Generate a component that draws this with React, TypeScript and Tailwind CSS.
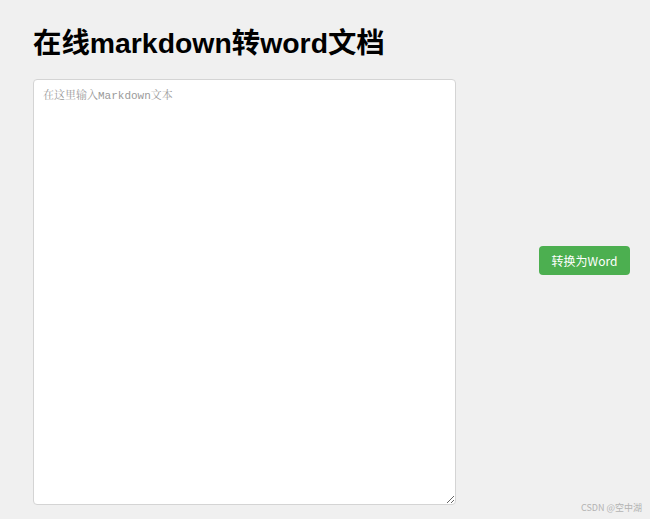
import React, { useState } from 'react';

const App: React.FC = () => {
  const [text, setText] = useState('');

  return (
    <div className="min-h-[519px] w-[650px] bg-[#f0f0f0] relative font-['Liberation_Sans','Noto_Sans_CJK_SC',sans-serif]">
      <div className="pl-[33px] pt-[24px]">
        <h1 className="text-[28.4px] leading-[38px] font-bold text-black">在线markdown转word文档</h1>
        <div className="flex items-start mt-[17px]">
          <textarea
            value={text}
            onChange={e => setText(e.target.value)}
            placeholder="在这里输入Markdown文本"
            className="w-[423px] h-[426px] bg-white border border-[#d4d4d4] rounded-[4px] px-[9px] py-[9px] text-[11px] leading-[15px] text-black placeholder:text-[#9a9a9a] font-['Liberation_Mono','Noto_Serif_CJK_SC','Noto_Sans_CJK_SC',monospace] outline-none"
          />
          <button className="ml-[83px] mt-[167px] w-[91px] h-[29px] bg-[#4caf50] text-white text-[12px] rounded-[4px] font-['Noto_Sans_CJK_SC',sans-serif]">
            转换为Word
          </button>
        </div>
      </div>
      <div className="absolute right-[8px] bottom-[5px] text-[9px] text-[#b3b3b3] font-['Noto_Sans_CJK_SC',sans-serif]">
        CSDN @空中湖
      </div>
    </div>
  );
};

export default App;
